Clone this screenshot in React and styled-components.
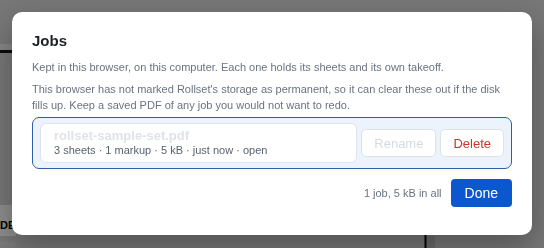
import React from 'react';
import styled, { createGlobalStyle } from 'styled-components';

const Global = createGlobalStyle`
  html, body { margin: 0; padding: 0; }
  body {
    font-family: "Liberation Sans", Arial, sans-serif;
    width: 544px;
    height: 248px;
    overflow: hidden;
    background: #cdcdcd;
  }
`;

const Page = styled.div`
  width: 544px;
  height: 248px;
  overflow: hidden;
`;

const Sheet = styled.svg`
  display: block;
  width: 544px;
  height: 248px;
`;

const Overlay = styled.div`
  position: fixed;
  inset: 0;
  background: rgba(0, 0, 0, 0.42);
  padding: 12px;
  display: flex;
  align-items: flex-start;
`;

const Modal = styled.div`
  width: 520px;
  box-sizing: border-box;
  background: #fff;
  border-radius: 10px;
  padding: 20px 20px 28px;
  box-shadow: 0 12px 32px rgba(0, 0, 0, 0.32);
`;

const Title = styled.h2`
  margin: 0;
  font-size: 15px;
  font-weight: 700;
  color: #1d2125;
`;

const Note = styled.p`
  margin: ${(p) => (p.$first ? '10px' : '6px')} 0 0;
  font-size: 11px;
  line-height: 16px;
  color: #6b7280;
`;

const JobList = styled.div`
  margin-top: 4px;
`;

const JobRow = styled.div`
  display: flex;
  align-items: center;
  gap: 4px;
  padding: 5px 7px;
  border: 1px solid #2f5fa6;
  border-radius: 7px;
  background: #edf3fc;
`;

const JobInfo = styled.div`
  flex: 1;
  min-width: 0;
  background: #fff;
  border: 1px solid #dfe4ea;
  border-radius: 6px;
  padding: 4px 13px;
`;

const JobName = styled.div`
  font-size: 13px;
  font-weight: 700;
  line-height: 15px;
  color: #dfe3e8;
`;

const JobMeta = styled.div`
  font-size: 11px;
  line-height: 15px;
  color: #59636e;
`;

const RowButton = styled.button`
  height: 28px;
  padding: 0 12px;
  border: 1px solid #dde2e8;
  border-radius: 5px;
  background: #fff;
  font-family: inherit;
  font-size: 13px;
  color: ${(p) => (p.$danger ? '#c0392b' : '#d6dae0')};
`;

const Footer = styled.div`
  display: flex;
  justify-content: flex-end;
  align-items: center;
  gap: 9px;
  margin-top: 10px;
`;

const Summary = styled.span`
  font-size: 11px;
  color: #6b7280;
`;

const DoneButton = styled.button`
  height: 28px;
  padding: 0 14px;
  border: none;
  border-radius: 4px;
  background: #0b57d0;
  color: #fff;
  font-family: inherit;
  font-size: 14px;
`;

export default function App() {
  return (
    <Page>
      <Global />
      <Sheet viewBox="0 0 544 248">
        <rect x="0" y="0" width="544" height="248" fill="#cdcdcd" />
        <rect x="0" y="44" width="14" height="6" fill="#e6e6e6" />
        <rect x="0" y="50" width="14" height="3" fill="#111" />
        <rect x="0" y="205" width="16" height="31" fill="#f4f4f4" />
        <text x="0" y="229" fontFamily="Liberation Sans" fontWeight="700" fontSize="11" fill="#000">DE</text>
        <text x="0" y="246" fontFamily="Liberation Sans" fontSize="6" fill="#e4e4e4" letterSpacing="0.3">TING</text>
        <rect x="424.5" y="200" width="2" height="48" fill="#000" />
        <rect x="427" y="236" width="8" height="12" fill="#b8b8b8" />
      </Sheet>
      <Overlay>
        <Modal>
          <Title>Jobs</Title>
          <Note $first>Kept in this browser, on this computer. Each one holds its sheets and its own takeoff.</Note>
          <Note>
            This browser has not marked Rollset's storage as permanent, so it can clear these out if the disk fills up. Keep a saved PDF of any job you would not want to redo.
          </Note>
          <JobList>
            <JobRow>
              <JobInfo>
                <JobName>rollset-sample-set.pdf</JobName>
                <JobMeta>3 sheets · 1 markup · 5 kB · just now · open</JobMeta>
              </JobInfo>
              <RowButton disabled>Rename</RowButton>
              <RowButton $danger>Delete</RowButton>
            </JobRow>
          </JobList>
          <Footer>
            <Summary>1 job, 5 kB in all</Summary>
            <DoneButton>Done</DoneButton>
          </Footer>
        </Modal>
      </Overlay>
    </Page>
  );
}
